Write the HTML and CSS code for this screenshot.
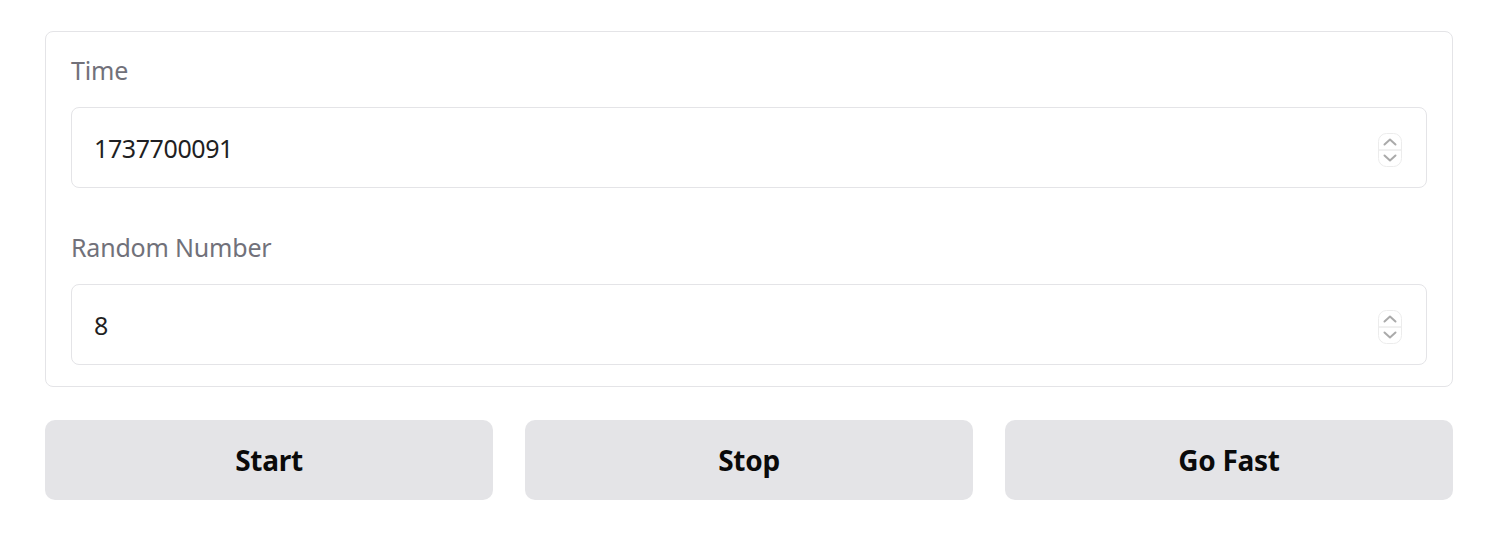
FILE: index.html
```html
<!DOCTYPE html>
<html>
<head>
<meta charset="utf-8">
<link rel="stylesheet" href="styles.css">
</head>
<body>
<div class="app">
  <div class="panel">
    <div class="field">
      <div class="label">Time</div>
      <div class="input">
        <span class="value">1737700091</span>
        <span class="spinner">
          <svg width="24" height="34" viewBox="0 0 24 34">
            <rect x="0.5" y="0.5" width="23" height="33" rx="8" fill="#fff" stroke="#ececec"/>
            <line x1="1" y1="17" x2="23" y2="17" stroke="#e2e2e2"/>
            <path d="M6.5 11.5 L12 6.5 L17.5 11.5" fill="none" stroke="#aaaaaa" stroke-width="2" stroke-linecap="round" stroke-linejoin="round"/>
            <path d="M6.5 22.5 L12 27.5 L17.5 22.5" fill="none" stroke="#aaaaaa" stroke-width="2" stroke-linecap="round" stroke-linejoin="round"/>
          </svg>
        </span>
      </div>
    </div>
    <div class="field">
      <div class="label">Random Number</div>
      <div class="input">
        <span class="value">8</span>
        <span class="spinner">
          <svg width="24" height="34" viewBox="0 0 24 34">
            <rect x="0.5" y="0.5" width="23" height="33" rx="8" fill="#fff" stroke="#ececec"/>
            <line x1="1" y1="17" x2="23" y2="17" stroke="#e2e2e2"/>
            <path d="M6.5 11.5 L12 6.5 L17.5 11.5" fill="none" stroke="#aaaaaa" stroke-width="2" stroke-linecap="round" stroke-linejoin="round"/>
            <path d="M6.5 22.5 L12 27.5 L17.5 22.5" fill="none" stroke="#aaaaaa" stroke-width="2" stroke-linecap="round" stroke-linejoin="round"/>
          </svg>
        </span>
      </div>
    </div>
  </div>
  <div class="buttons">
    <button class="btn">Start</button>
    <button class="btn">Stop</button>
    <button class="btn">Go Fast</button>
  </div>
</div>
</body>
</html>
```
FILE: styles.css
```css
html, body {
  margin: 0;
  padding: 0;
  background: #ffffff;
}
body {
  font-family: "Noto Sans", "Open Sans", sans-serif;
}
.app {
  width: 1408px;
  margin-left: 45px;
  padding-top: 31px;
}
.panel {
  border: 1px solid #e4e4e7;
  border-radius: 8px;
  padding: 18px 25px 21px 25px;
  display: flex;
  flex-direction: column;
  gap: 39px;
}
.field {
  display: flex;
  flex-direction: column;
}
.label {
  font-size: 25px;
  line-height: 40px;
  height: 40px;
  color: #71717a;
  margin-bottom: 17px;
  letter-spacing: -0.2px;
}
.input {
  height: 81px;
  box-sizing: border-box;
  border: 1px solid #e4e4e7;
  border-radius: 8px;
  display: flex;
  align-items: center;
  justify-content: space-between;
  padding: 0 24px 0 22px;
}
.value {
  font-size: 25px;
  color: #1f1f23;
  letter-spacing: -0.4px;
}
.spinner {
  display: flex;
  margin-top: 4px;
}
.buttons {
  margin-top: 33px;
  display: flex;
  gap: 32px;
}
.btn {
  flex: 1;
  height: 80px;
  border: none;
  border-radius: 10px;
  background: #e4e4e7;
  font-family: "Noto Sans", "Open Sans", sans-serif;
  font-size: 28px;
  font-weight: 700;
  color: #0a0a0a;
  letter-spacing: -0.3px;
  padding: 0;
}
```
